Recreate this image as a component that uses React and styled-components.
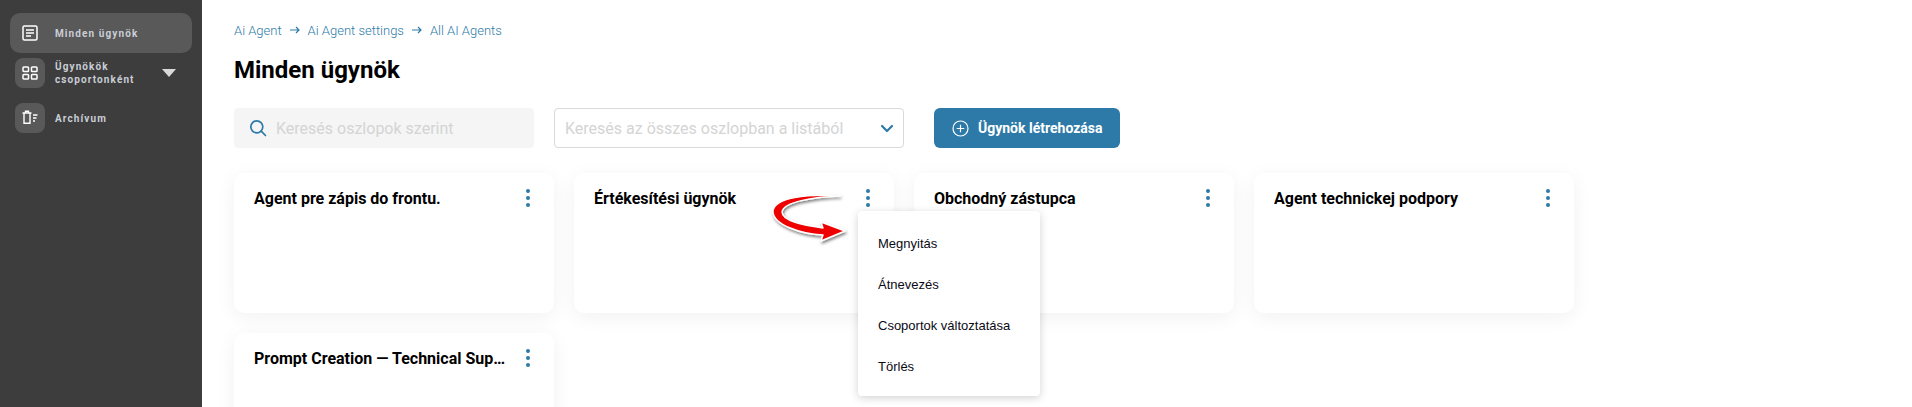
import React from 'react';
import styled, { createGlobalStyle } from 'styled-components';

const Global = createGlobalStyle`
  html, body { margin: 0; padding: 0; height: 100%; overflow: hidden; background: #fff; }
  * { box-sizing: border-box; }
  #root { height: 100%; }
`;

const Shell = styled.div`
  display: flex;
  height: 100vh;
  overflow: hidden;
  font-family: Roboto, "Liberation Sans", sans-serif;
`;

const Sidebar = styled.aside`
  width: 202px;
  flex: none;
  background: #3d3d3d;
  padding: 13px 10px 0;
  display: flex;
  flex-direction: column;
  gap: 5px;
`;

const NavItem = styled.div`
  display: flex;
  align-items: center;
  height: ${p => (p.$active ? 40 : 30)}px;
  margin-bottom: ${p => (p.$active ? 0 : 10)}px;
  padding-left: 5px;
  padding-right: 16px;
  border-radius: 10px;
  background: ${p => (p.$active ? '#595959' : 'transparent')};
`;

const NavIcon = styled.span`
  width: 30px;
  height: 30px;
  flex: none;
  display: flex;
  align-items: center;
  justify-content: center;
  border-radius: 8px;
  background: ${p => (p.$active ? 'transparent' : '#595959')};
  color: #fff;
`;

const NavLabel = styled.span`
  flex: 1;
  margin-left: 10px;
  font-size: 10px;
  font-weight: 700;
  line-height: 13px;
  letter-spacing: 1.1px;
  color: #c9ced6;
`;

const Caret = styled.span`
  width: 0;
  height: 0;
  border-left: 7px solid transparent;
  border-right: 7px solid transparent;
  border-top: 8px solid #d9d9d9;
`;

const Main = styled.main`
  flex: 1;
  padding: 21px 0 0 32px;
  min-width: 0;
`;

const Crumbs = styled.nav`
  display: flex;
  align-items: center;
  height: 18px;
  gap: 8px;
  font-size: 13px;
  color: #2d7aa8;
  font-weight: 300;
`;

const Title = styled.h1`
  margin: 14px 0 0;
  font-size: 24px;
  line-height: 34px;
  font-weight: 700;
  color: #000;
`;

const Toolbar = styled.div`
  display: flex;
  align-items: center;
  margin-top: 21px;
  height: 40px;
`;

const Search = styled.div`
  width: 300px;
  height: 40px;
  display: flex;
  align-items: center;
  gap: 9px;
  padding-left: 15px;
  background: #f5f5f5;
  border-radius: 4px;
  color: #2d7aa8;
`;

const Placeholder = styled.span`
  font-size: 16px;
  color: #d4d4d4;
  white-space: nowrap;
`;

const Select = styled.div`
  width: 350px;
  height: 40px;
  margin-left: 20px;
  display: flex;
  align-items: center;
  justify-content: space-between;
  padding: 0 9px 0 10px;
  border: 1px solid #d9d9d9;
  border-radius: 4px;
  color: #2d7aa8;
`;

const CreateButton = styled.button`
  width: 186px;
  height: 40px;
  margin-left: 30px;
  display: flex;
  align-items: center;
  gap: 9px;
  padding: 0 0 0 18px;
  border: 0;
  border-radius: 6px;
  background: #2d7aa8;
  color: #fff;
  font-family: inherit;
  font-size: 14px;
  font-weight: 700;
`;

const Grid = styled.div`
  display: grid;
  grid-template-columns: repeat(4, 320px);
  grid-auto-rows: 140px;
  gap: 20px;
  margin-top: 25px;
`;

const Card = styled.article`
  position: relative;
  border-radius: 10px;
  background: #fff;
  box-shadow: 0 4px 20px rgba(0, 0, 0, 0.06);
  padding: 15px 20px;
  display: flex;
  justify-content: space-between;
  align-items: flex-start;
`;

const CardTitle = styled.h2`
  margin: 0;
  width: 252px;
  font-size: 16px;
  line-height: 22px;
  font-weight: 700;
  color: #000;
  white-space: nowrap;
  overflow: hidden;
  text-overflow: ellipsis;
`;

const Kebab = styled.span`
  display: flex;
  flex-direction: column;
  gap: 3px;
  margin: 1px 4px 0 0;
  & > i {
    width: 4px;
    height: 4px;
    border-radius: 50%;
    background: #2d7aa8;
  }
`;

const Menu = styled.ul`
  position: absolute;
  left: 284px;
  top: 38px;
  width: 182px;
  height: 185px;
  margin: 0;
  padding: 12px 0 0 20px;
  list-style: none;
  background: #fff;
  border-radius: 4px;
  box-shadow: 0 2px 8px rgba(0, 0, 0, 0.18);
  z-index: 2;
`;

const MenuItem = styled.li`
  height: 41px;
  display: flex;
  align-items: center;
  font-family: "Liberation Sans", Arial, sans-serif;
  font-size: 13px;
  color: #0a0a14;
`;

const Callout = styled.svg`
  position: absolute;
  left: 205px;
  top: 2px;
  z-index: 3;
  overflow: visible;
`;

const DocIcon = () => (
  <svg width="16" height="16" viewBox="0 0 16 16" fill="none" stroke="currentColor" strokeWidth="1.5">
    <rect x="1" y="1" width="14" height="14" rx="1.5" />
    <path d="M4 5h8M4 8h8M4 11h5" />
  </svg>
);
const GridIcon = () => (
  <svg width="16" height="16" viewBox="0 0 16 16" fill="none" stroke="currentColor" strokeWidth="1.5">
    <rect x="1" y="2" width="5.5" height="4.5" rx="0.8" />
    <rect x="9.5" y="2" width="5.5" height="4.5" rx="0.8" />
    <rect x="1" y="9.5" width="5.5" height="4.5" rx="0.8" />
    <rect x="9.5" y="9.5" width="5.5" height="4.5" rx="0.8" />
  </svg>
);
const TrashIcon = () => (
  <svg width="16" height="16" viewBox="0 0 16 16" fill="none" stroke="currentColor" strokeWidth="1.4">
    <path d="M0.5 3h9M3.5 3V1.2h3V3M2 3v10.3h6V3" />
    <path d="M11 5h4.5M11 8h3.5M11 11h2" />
  </svg>
);
const SearchIcon = () => (
  <svg width="18" height="18" viewBox="0 0 18 18" fill="none" stroke="currentColor" strokeWidth="1.7" strokeLinecap="round">
    <circle cx="7.8" cy="7.8" r="6" />
    <path d="M12.2 12.2l4.3 4.3" />
  </svg>
);
const Chevron = () => (
  <svg width="14" height="9" viewBox="0 0 14 9" fill="none" stroke="currentColor" strokeWidth="2.2" strokeLinecap="round" strokeLinejoin="round">
    <path d="M2 2l5 5 5-5" />
  </svg>
);
const PlusCircle = () => (
  <svg width="17" height="17" viewBox="0 0 17 17" fill="none" stroke="currentColor" strokeWidth="1.2">
    <circle cx="8.5" cy="8.5" r="7.5" />
    <path d="M8.5 4.7v7.6M4.7 8.5h7.6" />
  </svg>
);
const Arrow = () => (
  <svg />
);

const agents = [
  'Agent pre zápis do frontu.',
  'Értékesítési ügynök',
  'Obchodný zástupca',
  'Agent technickej podpory',
  'Prompt Creation — Technical Support Agent',
];
const menuItems = ['Megnyitás', 'Átnevezés', 'Csoportok változtatása', 'Törlés'];

export default function App() {
  return (
    <Shell>
      <Global />
      <Sidebar>
        <NavItem $active>
          <NavIcon $active><DocIcon /></NavIcon>
          <NavLabel>Minden ügynök</NavLabel>
        </NavItem>
        <NavItem>
          <NavIcon><GridIcon /></NavIcon>
          <NavLabel>Ügynökök<br />csoportonként</NavLabel>
          <Caret />
        </NavItem>
        <NavItem>
          <NavIcon><TrashIcon /></NavIcon>
          <NavLabel>Archívum</NavLabel>
        </NavItem>
      </Sidebar>
      <Main>
        <Crumbs>
          <span>Ai Agent</span>
          <svg width="10" height="8" viewBox="0 0 10 8" fill="none" stroke="currentColor" strokeWidth="1.2"><path d="M0 4h9M6 1l3 3-3 3" /></svg>
          <span>Ai Agent settings</span>
          <svg width="10" height="8" viewBox="0 0 10 8" fill="none" stroke="currentColor" strokeWidth="1.2"><path d="M0 4h9M6 1l3 3-3 3" /></svg>
          <span>All AI Agents</span>
        </Crumbs>
        <Title>Minden ügynök</Title>
        <Toolbar>
          <Search><SearchIcon /><Placeholder>Keresés oszlopok szerint</Placeholder></Search>
          <Select><Placeholder>Keresés az összes oszlopban a listából</Placeholder><Chevron /></Select>
          <CreateButton><PlusCircle />Ügynök létrehozása</CreateButton>
        </Toolbar>
        <Grid>
          {agents.map((name, i) => (
            <Card key={name}>
              <CardTitle>{name}</CardTitle>
              <Kebab><i /><i /><i /></Kebab>
              {i === 1 && (
                <>
                  <Menu>
                    {menuItems.map(m => <MenuItem key={m}>{m}</MenuItem>)}
                  </Menu>
                  <Callout width="90" height="70" viewBox="0 0 90 70">
                    <defs>
                      <filter id="sh" x="-20%" y="-20%" width="150%" height="150%">
                        <feDropShadow dx="1" dy="2" stdDeviation="1.5" floodColor="#000" floodOpacity="0.5" />
                      </filter>
                    </defs>
                    <path
                      d="M61 21 C34 22 4 27 3 37 C3 46 24 50 44 53 L42 47 L66 56 L42 66 L44 60 C22 59 -5 50 -6 37 C-6 22 30 19 61 21 Z"
                      fill="#ee0000"
                      stroke="#fff"
                      strokeWidth="1.4"
                      strokeLinejoin="round"
                      filter="url(#sh)"
                    />
                  </Callout>
                </>
              )}
            </Card>
          ))}
        </Grid>
      </Main>
    </Shell>
  );
}
